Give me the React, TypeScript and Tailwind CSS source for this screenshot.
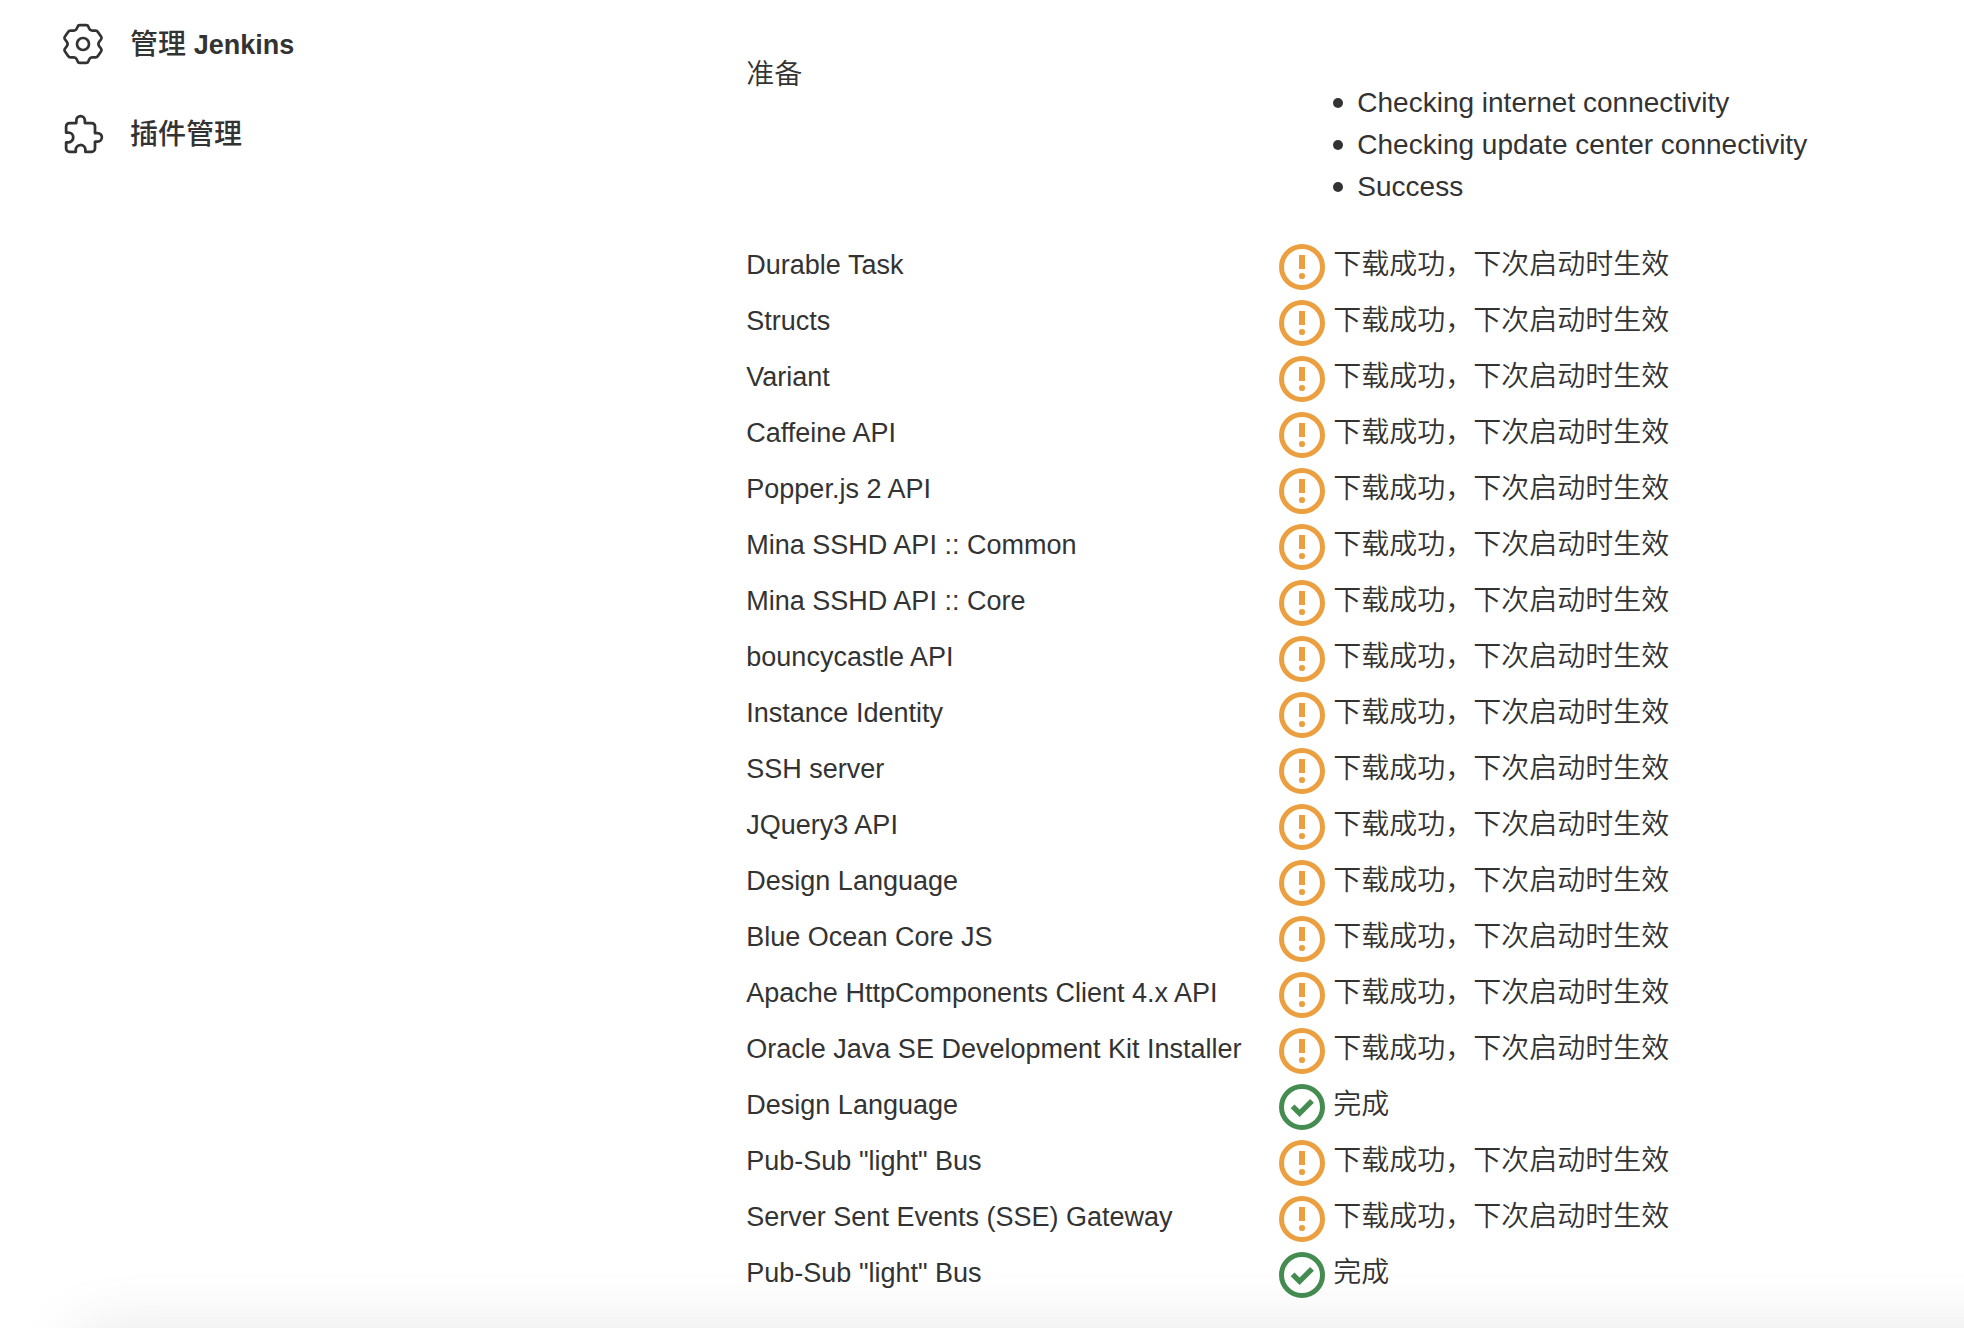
import React from "react";
import { IoExtensionPuzzleOutline } from "react-icons/io5";

type Status = "pending" | "done";

const plugins: { name: string; status: Status }[] = [
  { name: "Durable Task", status: "pending" },
  { name: "Structs", status: "pending" },
  { name: "Variant", status: "pending" },
  { name: "Caffeine API", status: "pending" },
  { name: "Popper.js 2 API", status: "pending" },
  { name: "Mina SSHD API :: Common", status: "pending" },
  { name: "Mina SSHD API :: Core", status: "pending" },
  { name: "bouncycastle API", status: "pending" },
  { name: "Instance Identity", status: "pending" },
  { name: "SSH server", status: "pending" },
  { name: "JQuery3 API", status: "pending" },
  { name: "Design Language", status: "pending" },
  { name: "Blue Ocean Core JS", status: "pending" },
  { name: "Apache HttpComponents Client 4.x API", status: "pending" },
  { name: "Oracle Java SE Development Kit Installer", status: "pending" },
  { name: "Design Language", status: "done" },
  { name: 'Pub-Sub "light" Bus', status: "pending" },
  { name: "Server Sent Events (SSE) Gateway", status: "pending" },
  { name: 'Pub-Sub "light" Bus', status: "done" },
];

const checks = [
  "Checking internet connectivity",
  "Checking update center connectivity",
  "Success",
];

const labels: Record<Status, string> = {
  pending: "下载成功，下次启动时生效",
  done: "完成",
};

function GearIcon() {
  return (
    <svg
      viewBox="-23 -23 46 46"
      className="mb-0.5 size-[46px] shrink-0"
      fill="none"
      stroke="currentColor"
      strokeWidth="2.7"
      strokeLinejoin="round"
      aria-hidden="true"
    >
      <circle r="6" />
      <path d="M-3.4 -18.9H3.4Q4.8 -18.9 5.3 -17.6L6.3 -15.2Q7.1 -13.3 9.1 -13.3H12.6Q14.1 -13.3 14.9 -12L18.2 -7.2Q19 -6 18.1 -4.7L16.2 -2.2Q14.6 0 16.2 2.2L18.1 4.7Q19 6 18.2 7.2L14.9 12Q14.1 13.3 12.6 13.3H9.1Q7.1 13.3 6.3 15.2L5.3 17.6Q4.8 18.9 3.4 18.9H-3.4Q-4.8 18.9 -5.3 17.6L-6.3 15.2Q-7.1 13.3 -9.1 13.3H-12.6Q-14.1 13.3 -14.9 12L-18.2 7.2Q-19 6 -18.1 4.7L-16.2 2.2Q-14.6 0 -16.2 -2.2L-18.1 -4.7Q-19 -6 -18.2 -7.2L-14.9 -12Q-14.1 -13.3 -12.6 -13.3H-9.1Q-7.1 -13.3 -6.3 -15.2L-5.3 -17.6Q-4.8 -18.9 -3.4 -18.9Z" />
    </svg>
  );
}

function StatusIcon({ status }: { status: Status }) {
  if (status === "done") {
    return (
      <svg viewBox="0 0 46 46" className="size-[46px] shrink-0 text-[#458c50]" fill="none" stroke="currentColor" aria-hidden="true">
        <circle cx="23" cy="23" r="20.5" strokeWidth="5" />
        <path d="M13.6 22.3 20.6 29.3 33 16.9" strokeWidth="5.4" />
      </svg>
    );
  }
  return (
    <svg viewBox="0 0 46 46" className="size-[46px] shrink-0 text-[#eb9f3f]" fill="none" stroke="currentColor" aria-hidden="true">
      <circle cx="23" cy="23" r="20.5" strokeWidth="5" />
      <path d="M23 11v14" strokeWidth="6" />
      <circle cx="23" cy="32" r="3.1" fill="currentColor" stroke="none" />
    </svg>
  );
}

export default function App() {
  return (
    <div className="flex min-h-screen items-start overflow-hidden bg-white font-['Liberation_Sans','Noto_Sans_CJK_SC',sans-serif] text-[28px] leading-[42px] text-[#333333]">
      <nav className="w-[38%] shrink-0 pl-[60px]">
        <a href="#manage" className="flex h-[90px] items-center gap-6 font-medium">
          <GearIcon />
          <span>
            管理 <span className="text-[27px] font-bold">Jenkins</span>
          </span>
        </a>
        <a href="#plugins" className="flex h-[90px] items-center gap-6 font-medium">
          <span className="mb-0.5 flex w-[46px] shrink-0 justify-end">
            <IoExtensionPuzzleOutline className="size-11" aria-hidden="true" />
          </span>
          <span>插件管理</span>
        </a>
      </nav>

      <main className="min-w-0 flex-1 pt-[54px] font-[350]">
        <table className="w-full border-collapse text-left">
          <tbody>
            <tr className="h-[183px] align-top">
              <th scope="row" className="w-[533px] whitespace-nowrap p-0 font-[350]">准备</th>
              <td className="p-0 pt-7">
                <ul className="pl-[54px]">
                  {checks.map((check) => (
                    <li
                      key={check}
                      className="flex items-center gap-3.5 before:size-2.5 before:rounded-full before:bg-current before:content-['']"
                    >
                      {check}
                    </li>
                  ))}
                </ul>
              </td>
            </tr>
            {plugins.map((plugin, index) => (
              <tr key={index} className="h-14">
                <th scope="row" className="whitespace-nowrap p-0 text-[27px] font-[350]">{plugin.name}</th>
                <td className="p-0">
                  <div className="flex h-14 items-center gap-2">
                    <span className="pt-1">
                      <StatusIcon status={plugin.status} />
                    </span>
                    <span className="whitespace-nowrap">{labels[plugin.status]}</span>
                  </div>
                </td>
              </tr>
            ))}
          </tbody>
        </table>
      </main>

      <div className="pointer-events-none fixed inset-x-0 bottom-0 h-24 overflow-hidden" aria-hidden="true">
        <div className="absolute -right-24 left-20 top-[104px] h-40 shadow-[0_0_70px_rgba(0,0,0,0.12)]" />
      </div>
    </div>
  );
}
